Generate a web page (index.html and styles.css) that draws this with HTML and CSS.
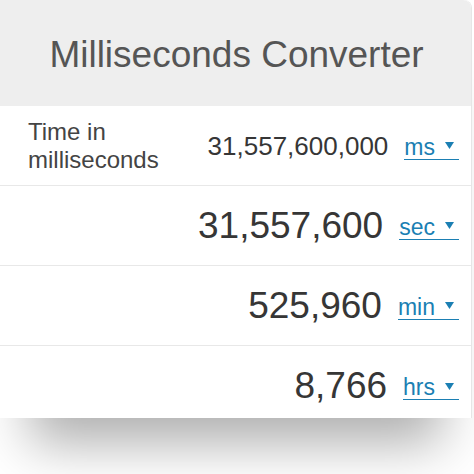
FILE: index.html
```html
<!DOCTYPE html>
<html>
<head>
<meta charset="utf-8">
<link rel="stylesheet" href="styles.css">
</head>
<body>
<div class="card">
  <div class="header"><h1 class="title">Milliseconds Converter</h1></div>
  <div class="row row-input">
    <div class="label">Time in<br>milliseconds</div>
    <div class="value value-small">31,557,600,000</div>
    <a class="unit" href="#">ms<svg class="caret" viewBox="0 0 9 7" width="9" height="7"><path d="M0 0H9L4.5 7Z"/></svg></a>
  </div>
  <div class="row">
    <div class="value">31,557,600</div>
    <a class="unit" href="#">sec<svg class="caret" viewBox="0 0 9 7" width="9" height="7"><path d="M0 0H9L4.5 7Z"/></svg></a>
  </div>
  <div class="row">
    <div class="value">525,960</div>
    <a class="unit" href="#">min<svg class="caret" viewBox="0 0 9 7" width="9" height="7"><path d="M0 0H9L4.5 7Z"/></svg></a>
  </div>
  <div class="row row-last">
    <div class="value">8,766</div>
    <a class="unit" href="#">hrs<svg class="caret" viewBox="0 0 9 7" width="9" height="7"><path d="M0 0H9L4.5 7Z"/></svg></a>
  </div>
</div>
</body>
</html>
```
FILE: styles.css
```css
html, body {
  margin: 0;
  padding: 0;
  background: #ffffff;
}
body {
  font-family: "Liberation Sans", Arial, sans-serif;
  width: 474px;
  height: 474px;
  overflow: hidden;
}
.card {
  width: 471px;
  background: #ffffff;
  border-right: 1px solid #e6e6e6;
  border-top-right-radius: 8px;
  box-shadow: 0 55px 50px -30px rgba(0, 0, 0, 0.32);
}
.header {
  height: 106px;
  background: #eeeeee;
  border-top-right-radius: 8px;
  display: flex;
  align-items: center;
  justify-content: center;
}
.title {
  margin: 0;
  font-weight: normal;
  font-size: 37px;
  color: #555555;
  padding-left: 2px;
  padding-top: 4px;
}
.row {
  height: 80px;
  box-sizing: border-box;
  border-bottom: 1px solid #e8e8e8;
  display: flex;
  align-items: center;
  justify-content: flex-end;
  padding: 0 12px 0 28px;
}
.row-last {
  height: 72px;
  border-bottom: none;
  align-items: flex-start;
  padding-top: 20px;
}
.label {
  flex: 1;
  font-size: 24px;
  line-height: 28px;
  color: #444444;
  padding-top: 1px;
}
.value {
  font-size: 37px;
  color: #363636;
  margin-right: 16px;
  line-height: 40px;
}
.value-small {
  font-size: 26px;
  margin-right: 16px;
}
.unit {
  display: inline-flex;
  align-items: center;
  font-size: 23px;
  line-height: 1;
  color: #1b7fb3;
  text-decoration: none;
  border-bottom: 1.5px solid #1b7fb3;
  white-space: nowrap;
  margin-top: 4px;
}
.row-last .unit {
  margin-top: 10px;
}
.caret {
  fill: #1b7fb3;
  margin-left: 10px;
  margin-right: 5px;
  margin-top: -3px;
}
```
